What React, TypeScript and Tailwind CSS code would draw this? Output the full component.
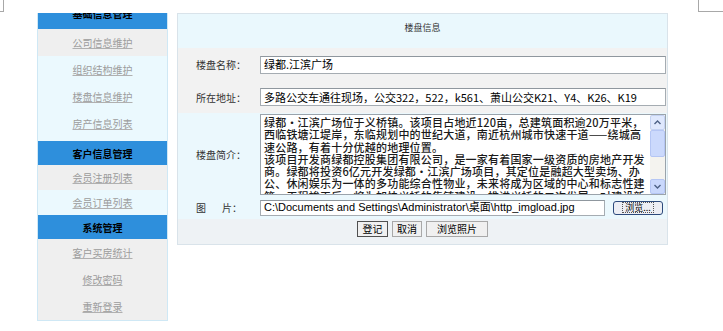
import React from "react";

const font = { fontFamily: '"Noto Sans CJK SC", "Liberation Sans", sans-serif' };

type Item = { label: string; bg: string };

function SideHeader({ title, clipped }: { title: string; clipped?: boolean }) {
  if (clipped) {
    return (
      <div className="h-[16px] overflow-hidden bg-[#2e8fdc]">
        <div className="-mt-[5px] text-center text-[10px] font-bold leading-[12px] text-black">{title}</div>
      </div>
    );
  }
  return (
    <div className="flex h-[24px] items-center justify-center bg-[#2e8fdc] text-[10px] font-bold text-black">
      {title}
    </div>
  );
}

function SideItem({ item, h }: { item: Item; h: string }) {
  return (
    <div className={`flex items-center justify-center ${h} ${item.bg}`}>
      <a className="text-[10px] text-[#9c9c9c] underline decoration-[#b0b0b0]">{item.label}</a>
    </div>
  );
}

function Sidebar() {
  const g1: Item[] = [
    { label: "公司信息维护", bg: "bg-[#efefef]" },
    { label: "组织结构维护", bg: "bg-[#ebf9fe]" },
    { label: "楼盘信息维护", bg: "bg-[#ebf9fe]" },
    { label: "房产信息列表", bg: "bg-[#ebf9fe]" },
  ];
  const g2: Item[] = [
    { label: "会员注册列表", bg: "bg-[#efefef]" },
    { label: "会员订单列表", bg: "bg-[#ebf9fe]" },
  ];
  const g3: Item[] = [
    { label: "客户买房统计", bg: "bg-[#efefef]" },
    { label: "修改密码", bg: "bg-[#efefef]" },
    { label: "重新登录", bg: "bg-[#efefef]" },
  ];
  return (
    <div className="flex w-[131px] flex-col border-x border-b border-[#cfe8f5]">
      <SideHeader title="基础信息管理" clipped />
      {g1.map((it, i) => (
        <SideItem key={it.label} item={it} h={i === 3 ? "h-[31px] pb-[5px]" : "h-[27px]"} />
      ))}
      <SideHeader title="客户信息管理" />
      {g2.map((it) => (
        <SideItem key={it.label} item={it} h="h-[25px]" />
      ))}
      <SideHeader title="系统管理" />
      {g3.map((it) => (
        <SideItem key={it.label} item={it} h="h-[27px]" />
      ))}
    </div>
  );
}

function Label({ children }: { children: React.ReactNode }) {
  return <div className="w-[82px] shrink-0 pl-[18px] text-[10px] text-[#333]">{children}</div>;
}

function TextBox({ value, w = "w-[406px]", h = "h-[18px]", latin }: { value: string; w?: string; h?: string; latin?: boolean }) {
  return (
    <div
      className={`flex ${w} ${h} items-center overflow-hidden whitespace-nowrap border border-[#a5acb2] border-t-[#8f979e] bg-white px-[3px] text-[11px] text-black`}
      style={latin ? { fontFamily: '"Liberation Sans", "Noto Sans CJK SC", sans-serif' } : undefined}
    >
      {value}
    </div>
  );
}

function Scrollbar() {
  return (
    <div className="flex w-[15px] flex-col bg-[#f4f3ef]">
      <div className="flex h-[15px] items-center justify-center rounded-[2px] border border-[#c4d2f2] bg-[#dfe8fd]">
        <svg width="7" height="5" viewBox="0 0 7 5">
          <path d="M0.5 4 L3.5 1 L6.5 4" stroke="#4d6185" strokeWidth="1.4" fill="none" />
        </svg>
      </div>
      <div className="h-[27px] rounded-[2px] border border-[#b5c6f4] bg-[#cbd9fc]" />
      <div className="flex-1" />
      <div className="flex h-[15px] items-center justify-center rounded-[2px] border border-[#b5c6f4] bg-[#c9d8fc]">
        <svg width="7" height="5" viewBox="0 0 7 5">
          <path d="M0.5 1 L3.5 4 L6.5 1" stroke="#4d6185" strokeWidth="1.4" fill="none" />
        </svg>
      </div>
    </div>
  );
}

const intro = [
  "绿都·江滨广场位于义桥镇。该项目占地近120亩，总建筑面积逾20万平米，",
  "西临铁塘江堤岸，东临规划中的世纪大道，南近杭州城市快速干道——绕城高",
  "速公路，有着十分优越的地理位置。",
  "该项目开发商绿都控股集团有限公司，是一家有着国家一级资质的房地产开发",
  "商。绿都将投资6亿元开发绿都·江滨广场项目，其定位是融超大型卖场、办",
  "公、休闲娱乐为一体的多功能综合性物业，未来将成为区域的中心和标志性建",
  "筑。工程竣工后，将为加快义桥的集镇建设，推进义桥的二次发展，对建设新",
];

function MainPanel() {
  return (
    <div className="flex h-[232px] w-[491px] flex-col border border-[#d9e3ea]">
      <div className="flex h-[34px] items-center justify-center bg-[#eaf8fd] pb-[6px] text-[9px] text-[#333]">楼盘信息</div>
      <div className="flex h-[33px] items-center bg-[#f2f2f2]">
        <Label>楼盘名称：</Label>
        <TextBox value="绿都.江滨广场" />
      </div>
      <div className="flex h-[32px] items-center bg-[#f2f2f2]">
        <Label>所在地址：</Label>
        <TextBox value="多路公交车通往现场，公交322，522，k561、萧山公交K21、Y4、K26、K19" />
      </div>
      <div className="flex h-[83px] items-center bg-[#ebf8fd]">
        <Label>楼盘简介：</Label>
        <div className="flex h-[81px] w-[406px] border border-[#9aa3ab] bg-white">
          <div className="min-w-0 flex-1 overflow-hidden px-[3px] pt-[1px] text-[11px] font-medium leading-[12.3px] tracking-[0.2px] text-[#1a1a1a]">
            {intro.map((l) => (
              <div key={l} className="whitespace-nowrap">
                {l}
              </div>
            ))}
          </div>
          <Scrollbar />
        </div>
      </div>
      <div className="flex h-[23px] items-center bg-[#ebf8fd]">
        <Label>
          <span>图</span>
          <span className="ml-[16px]">片：</span>
        </Label>
        <TextBox value="C:\Documents and Settings\Administrator\桌面\http_imgload.jpg" w="w-[345px]" h="h-[16px]" latin />
        <button className="ml-[8px] flex h-[14px] w-[50px] items-center justify-center rounded-[3px] border border-[#2c4a7c] bg-[#eceef4] text-[9px] leading-none text-black">
          <span className="border border-dotted border-[#555] px-[2px] leading-[9px]">浏览...</span>
        </button>
      </div>
      <div className="flex flex-1 justify-center gap-[4px] bg-[#eef2f5] pt-[2px]">
        <button className="h-[16px] w-[31px] border border-[#505050] bg-[#f0f0f0] text-[10px] leading-none text-black">登记</button>
        <button className="h-[16px] w-[30px] border border-[#a8a8a8] bg-[#f0f0f0] text-[10px] leading-none text-black">取消</button>
        <button className="h-[16px] w-[62px] border border-[#a8a8a8] bg-[#f0f0f0] text-[10px] leading-none text-black">浏览照片</button>
      </div>
    </div>
  );
}

export default function App() {
  return (
    <div className="h-[331px] w-[723px] overflow-hidden bg-white" style={font}>
      <div className="flex h-[13px] justify-between">
        <div className="h-[12px] w-[4px] border-b border-r border-[#a8a8a8]" />
        <div className="h-[12px] w-[25px] border-b border-l border-[#a8a8a8]" />
      </div>
      <div className="flex items-start gap-[9px] pl-[37px]">
        <Sidebar />
        <MainPanel />
      </div>
    </div>
  );
}
